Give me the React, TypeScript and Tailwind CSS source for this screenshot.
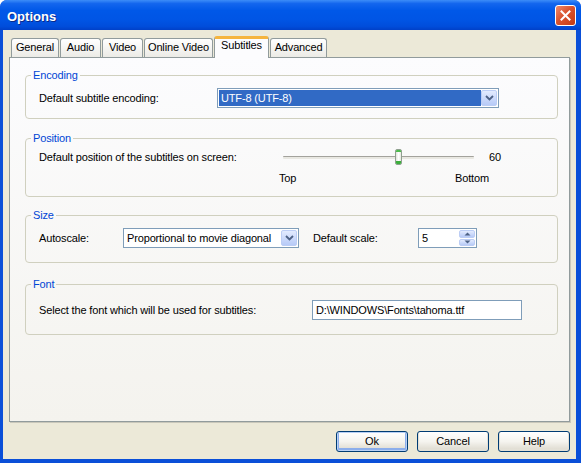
import React from "react";

function ComboArrow() {
  return (
    <div className="w-[16px] h-[16px] shrink-0 flex items-center justify-center rounded-[2px] border border-[#BCCDF5] bg-gradient-to-b from-[#E3EBFE] to-[#B7CAF7]">
      <svg width="9" height="6" viewBox="0 0 9 6">
        <path d="M1 1 L4.5 4.5 L8 1" stroke="#4D6185" strokeWidth="1.8" fill="none" />
      </svg>
    </div>
  );
}

function Tab({ label, w, selected }: { label: string; w: string; selected?: boolean }) {
  if (selected) {
    return (
      <div
        className={
          w +
          " relative z-10 h-[22px] -mb-[1px] flex justify-center rounded-t-[3px] border border-b-0 border-[#919B9C] border-t-[3px] border-t-[#F5B43E] bg-[#FCFCFE] leading-[13px]"
        }
      >
        {label}
      </div>
    );
  }
  return (
    <div
      className={
        w +
        " h-[19px] flex justify-center pt-[2px] rounded-t-[3px] border border-b-0 border-[#919B9C] bg-gradient-to-b from-[#FFFFFF] to-[#ECEBE6] leading-[13px]"
      }
    >
      {label}
    </div>
  );
}

function Group({ title, cls, children }: { title: string; cls?: string; children: React.ReactNode }) {
  return (
    <fieldset className={"border border-[#D0D0BF] rounded-[4px] " + (cls ?? "")}>
      <legend className="ml-[5px] px-[2px] text-[#0046D5] leading-[13px]">{title}</legend>
      {children}
    </fieldset>
  );
}

function XPButton({ label, def }: { label: string; def?: boolean }) {
  return (
    <div
      className={
        "w-[72px] h-[21px] flex items-center justify-center rounded-[3px] border border-[#003C74] bg-gradient-to-b from-[#FFFFFF] via-[#F5F4EF] to-[#DCD8CC] " +
        (def ? "shadow-[inset_0_0_0_1px_#B8D0F5,inset_0_-1px_0_2px_#8CAEEB]" : "shadow-[inset_0_-1px_0_1px_#E3E0D6]")
      }
    >
      {label}
    </div>
  );
}

export default function App() {
  const value = 60;
  return (
    <div className="w-[581px] h-[463px] flex flex-col rounded-t-[7px] overflow-hidden bg-[#0A4FD8] font-['Liberation_Sans',Arial,sans-serif] text-[11px] tracking-[-0.15px] text-black">
      {/* Title bar */}
      <div className="h-[30px] shrink-0 flex items-center justify-between pl-[7px] pr-[5px] bg-[linear-gradient(to_bottom,#3C8DF8_0%,#1366EE_12%,#0058E8_35%,#0055E5_65%,#004DDB_88%,#0040C8_100%)]">
        <span className="mt-[3px] text-white font-bold text-[13px] tracking-normal [text-shadow:1px_1px_0_#0A2A8A]">Options</span>
        <div className="w-[21px] h-[21px] flex items-center justify-center rounded-[3px] border border-white bg-[linear-gradient(135deg,#EE8A6C_0%,#D9532F_45%,#C23A14_100%)]">
          <svg width="11" height="11" viewBox="0 0 11 11">
            <path d="M1.5 1.5 L9.5 9.5 M9.5 1.5 L1.5 9.5" stroke="#FFFFFF" strokeWidth="2" strokeLinecap="square" />
          </svg>
        </div>
      </div>

      {/* Client area */}
      <div className="flex-1 flex flex-col ml-[3px] mr-[5px] mb-[4px] bg-[#ECE9D8] px-[6px] pt-[6px] pb-[7px]">
        {/* Tabs */}
        <div className="h-[21px] shrink-0 flex items-end pl-[2px] gap-[1px]">
          <Tab label="General" w="w-[48px]" />
          <Tab label="Audio" w="w-[41px]" />
          <Tab label="Video" w="w-[41px]" />
          <Tab label="Online Video" w="w-[69px]" />
          <Tab label="Subtitles" w="w-[55px]" selected />
          <Tab label="Advanced" w="w-[57px]" />
        </div>

        {/* Panel */}
        <div className="flex-1 flex flex-col border border-[#919B9C] bg-gradient-to-b from-[#FCFCFE] to-[#F4F3EE] shadow-[1px_1px_0_#C9C7BA] pl-[15px] pr-[11px] pt-[11px]">
          <Group title="Encoding">
            <div className="pl-[13px] pt-[6px] pb-[10px] flex items-center">
              <div className="w-[178px]">Default subtitle encoding:</div>
              <div className="w-[282px] h-[20px] flex border border-[#7F9DB9] bg-white p-[1px]">
                <div className="flex-1 h-full flex items-center bg-[#316AC5] text-white pl-[2px]">UTF-8 (UTF-8)</div>
                <ComboArrow />
              </div>
            </div>
          </Group>

          <Group title="Position" cls="mt-[13px]">
            <div className="pl-[13px] pt-[4px] pb-[11px] flex flex-col">
              <div className="h-[16px] flex items-center">
                <div className="w-[244px]">Default position of the subtitles on screen:</div>
                <div className="w-[191px] h-[16px] relative flex items-center">
                  <div className="w-full h-[3px] rounded-[1px] border-t border-[#A3A29C] bg-[#E9E8E2]" />
                  <div
                    className="absolute top-0 w-[7px] h-[16px] flex flex-col rounded-[2px] overflow-hidden border border-[#8FA08F] bg-gradient-to-r from-[#E2E2DC] via-[#FFFFFF] to-[#E8E8E2]"
                    style={{ left: `calc(${value}% - 3px)` }}
                  >
                    <div className="h-[2px] bg-[#4DBB4D]" />
                    <div className="flex-1" />
                    <div className="h-[3px] bg-[#3CAF3C]" />
                  </div>
                </div>
                <div className="ml-[15px]">{value}</div>
              </div>
              <div className="mt-[7px] h-[13px] flex items-center">
                <div className="ml-[240px] w-[210px] flex justify-between">
                  <span>Top</span>
                  <span>Bottom</span>
                </div>
              </div>
            </div>
          </Group>

          <Group title="Size" cls="mt-[12px]">
            <div className="pl-[13px] pt-[6px] pb-[14px] flex items-center">
              <div className="w-[84px]">Autoscale:</div>
              <div className="w-[176px] h-[20px] flex border border-[#7F9DB9] bg-white p-[1px]">
                <div className="flex-1 h-full flex items-center pl-[2px]">Proportional to movie diagonal</div>
                <ComboArrow />
              </div>
              <div className="ml-[14px] w-[105px]">Default scale:</div>
              <div className="w-[59px] h-[20px] flex border border-[#7F9DB9] bg-white p-[1px]">
                <div className="flex-1 h-full flex items-center pl-[2px]">5</div>
                <div className="w-[16px] h-full flex flex-col gap-[1px]">
                  <div className="flex-1 flex items-center justify-center rounded-[2px] border border-[#BCCDF5] bg-gradient-to-b from-[#E3EBFE] to-[#B7CAF7]">
                    <svg width="7" height="4" viewBox="0 0 7 4"><path d="M0.5 3.5 L3.5 0.5 L6.5 3.5 Z" fill="#4D6185" /></svg>
                  </div>
                  <div className="flex-1 flex items-center justify-center rounded-[2px] border border-[#BCCDF5] bg-gradient-to-b from-[#E3EBFE] to-[#B7CAF7]">
                    <svg width="7" height="4" viewBox="0 0 7 4"><path d="M0.5 0.5 L3.5 3.5 L6.5 0.5 Z" fill="#4D6185" /></svg>
                  </div>
                </div>
              </div>
            </div>
          </Group>

          <Group title="Font" cls="mt-[15px]">
            <div className="pl-[13px] pt-[9px] pb-[14px] flex items-center">
              <div className="w-[273px]">Select the font which will be used for subtitles:</div>
              <div className="w-[210px] h-[20px] flex items-center border border-[#7F9DB9] bg-white pl-[3px]">
                D:\WINDOWS\Fonts\tahoma.ttf
              </div>
            </div>
          </Group>
        </div>

        {/* Buttons */}
        <div className="mt-[9px] flex justify-end gap-[9px]">
          <XPButton label="Ok" def />
          <XPButton label="Cancel" />
          <XPButton label="Help" />
        </div>
      </div>
    </div>
  );
}
